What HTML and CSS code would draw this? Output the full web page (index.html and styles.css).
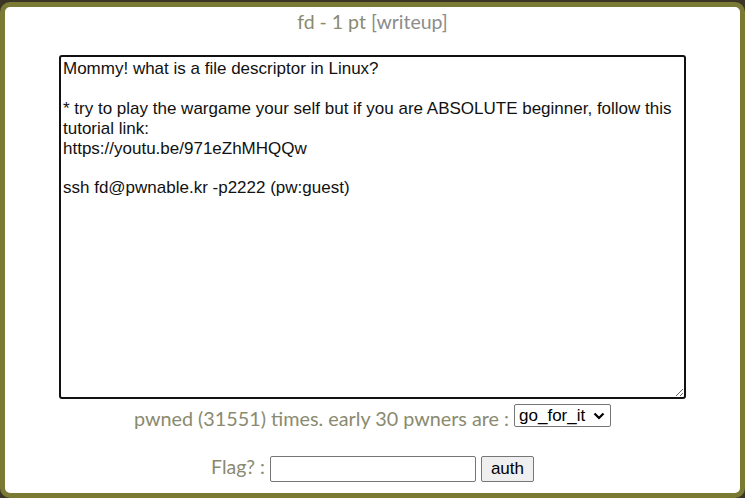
FILE: index.html
```html
<!DOCTYPE html>
<html>
<head>
<meta charset="utf-8">
<link rel="stylesheet" href="styles.css">
</head>
<body>
<div class="modal">
  <div class="title">fd - 1 pt <span class="wu">[writeup]</span></div>
  <textarea class="desc">Mommy! what is a file descriptor in Linux?

* try to play the wargame your self but if you are ABSOLUTE beginner, follow this tutorial link:
https://youtu.be/971eZhMHQQw

ssh fd@pwnable.kr -p2222 (pw:guest)
</textarea>
  <div class="pwned">pwned (31551) times. early 30 pwners are : <span class="selwrap"><select class="sel"><option>go_for_it</option></select><svg class="chev" width="12" height="8" viewBox="0 0 12 8"><path d="M1.5 1.5 L6 6 L10.5 1.5" fill="none" stroke="#000" stroke-width="2.2"/></svg></span></div>
  <div class="flag">Flag? : <input class="inp" type="text"> <button class="btn">auth</button></div>
</div>
</body>
</html>
```

FILE: styles.css
```css
html, body {
  margin: 0;
  padding: 0;
  background: #3a3526;
  overflow: hidden;
}
.modal {
  margin-top: 2px;
  width: 745px;
  height: 496px;
  box-sizing: border-box;
  border: 5px solid #7b7a35;
  border-radius: 10px;
  background: #fff;
  display: flex;
  flex-direction: column;
  align-items: center;
  font-family: Lato, "Liberation Sans", sans-serif;
  color: #8a8a70;
}
.title {
  font-size: 19.5px;
  line-height: 26px;
  padding-top: 2px;
}
.wu {
  color: #8c8c8c;
}
.desc {
  margin-top: 20px;
  width: 627px;
  height: 344px;
  box-sizing: border-box;
  border: 2px solid #111;
  border-radius: 3px;
  padding: 2px;
  font-family: "Liberation Sans", Arial, sans-serif;
  font-size: 17px;
  line-height: 19.9px;
  color: #111;
  outline: none;
}
.pwned {
  margin-top: 5px;
  font-size: 19.8px;
  line-height: 26px;
}
.selwrap {
  position: relative;
  display: inline-block;
  vertical-align: 1px;
}
.sel {
  appearance: none;
  -webkit-appearance: none;
  font-family: "Liberation Sans", Arial, sans-serif;
  font-size: 17px;
  width: 97px;
  height: 23px;
  padding: 0 0 0 4px;
  border: 1px solid #767676;
  border-radius: 2px;
  background: #fff;
  color: #000;
  vertical-align: top;
}
.chev {
  position: absolute;
  right: 6px;
  top: 8px;
  pointer-events: none;
}
.flag {
  margin-top: 23px;
  font-size: 19.5px;
  line-height: 26px;
}
.inp {
  width: 206px;
  height: 26px;
  box-sizing: border-box;
  border: 1px solid #767676;
  border-radius: 2px;
  font-size: 16px;
  vertical-align: middle;
}
.btn {
  width: 53px;
  height: 26px;
  box-sizing: border-box;
  border: 1px solid #767676;
  border-radius: 2px;
  background: #efefef;
  font-family: "Liberation Sans", Arial, sans-serif;
  font-size: 17px;
  color: #000;
  padding: 0;
  vertical-align: middle;
}
```
